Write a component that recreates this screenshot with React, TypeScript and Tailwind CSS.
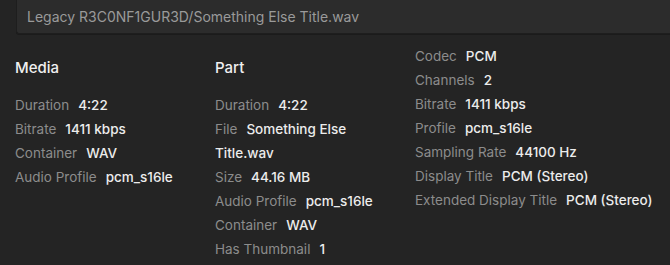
const media: [string, string][] = [
  ['Duration', '4:22'],
  ['Bitrate', '1411 kbps'],
  ['Container', 'WAV'],
  ['Audio Profile', 'pcm_s16le'],
]

const part: [string, string][] = [
  ['Duration', '4:22'],
  ['File', 'Something Else Title.wav'],
  ['Size', '44.16 MB'],
  ['Audio Profile', 'pcm_s16le'],
  ['Container', 'WAV'],
  ['Has Thumbnail', '1'],
]

const stream: [string, string][] = [
  ['Codec', 'PCM'],
  ['Channels', '2'],
  ['Bitrate', '1411 kbps'],
  ['Profile', 'pcm_s16le'],
  ['Sampling Rate', '44100 Hz'],
  ['Display Title', 'PCM (Stereo)'],
  ['Extended Display Title', 'PCM (Stereo)'],
]

function Row({ label, value }: { label: string; value: string }) {
  return (
    <div className="leading-[24px]">
      <span className="text-[#8c8c8c] mr-[9px]">{label}</span>
      <span className="text-[#ececec] font-medium">{value}</span>
    </div>
  )
}

export default function App() {
  return (
    <div
      className="w-[670px] h-[265px] overflow-hidden bg-[#242424] text-[13.5px]"
      style={{ fontFamily: 'Inter, "Liberation Sans", sans-serif' }}
    >
      {/* File path */}
      <div className="ml-[16px] -mt-[4px] h-[38px] pt-[4px] pl-[10px] flex items-center bg-[#2c2c2c] border border-[#1e1e1e] border-r-0 border-t-0 rounded-bl-[3px] shadow-[0_1px_0_rgba(0,0,0,0.25)]">
        <span className="text-[#9a9a9a] text-[14px]">Legacy R3C0NF1GUR3D/Something Else Title.wav</span>
      </div>

      <div className="flex mt-[10px]">
        {/* Media */}
        <div className="w-[200px] pl-[15px] pr-[15px]">
          <div className="h-[49px] flex items-center text-[15px] font-medium text-[#f0f0f0]">Media</div>
          {media.map(([l, v]) => (
            <Row key={l} label={l} value={v} />
          ))}
        </div>

        {/* Part */}
        <div className="w-[200px] pl-[15px] pr-[15px]">
          <div className="h-[49px] flex items-center text-[15px] font-medium text-[#f0f0f0]">Part</div>
          {part.map(([l, v]) => (
            <Row key={l} label={l} value={v} />
          ))}
        </div>

        {/* Stream */}
        <div className="flex-1 pl-[15px]">
          {stream.map(([l, v]) => (
            <Row key={l} label={l} value={v} />
          ))}
        </div>
      </div>
    </div>
  )
}
